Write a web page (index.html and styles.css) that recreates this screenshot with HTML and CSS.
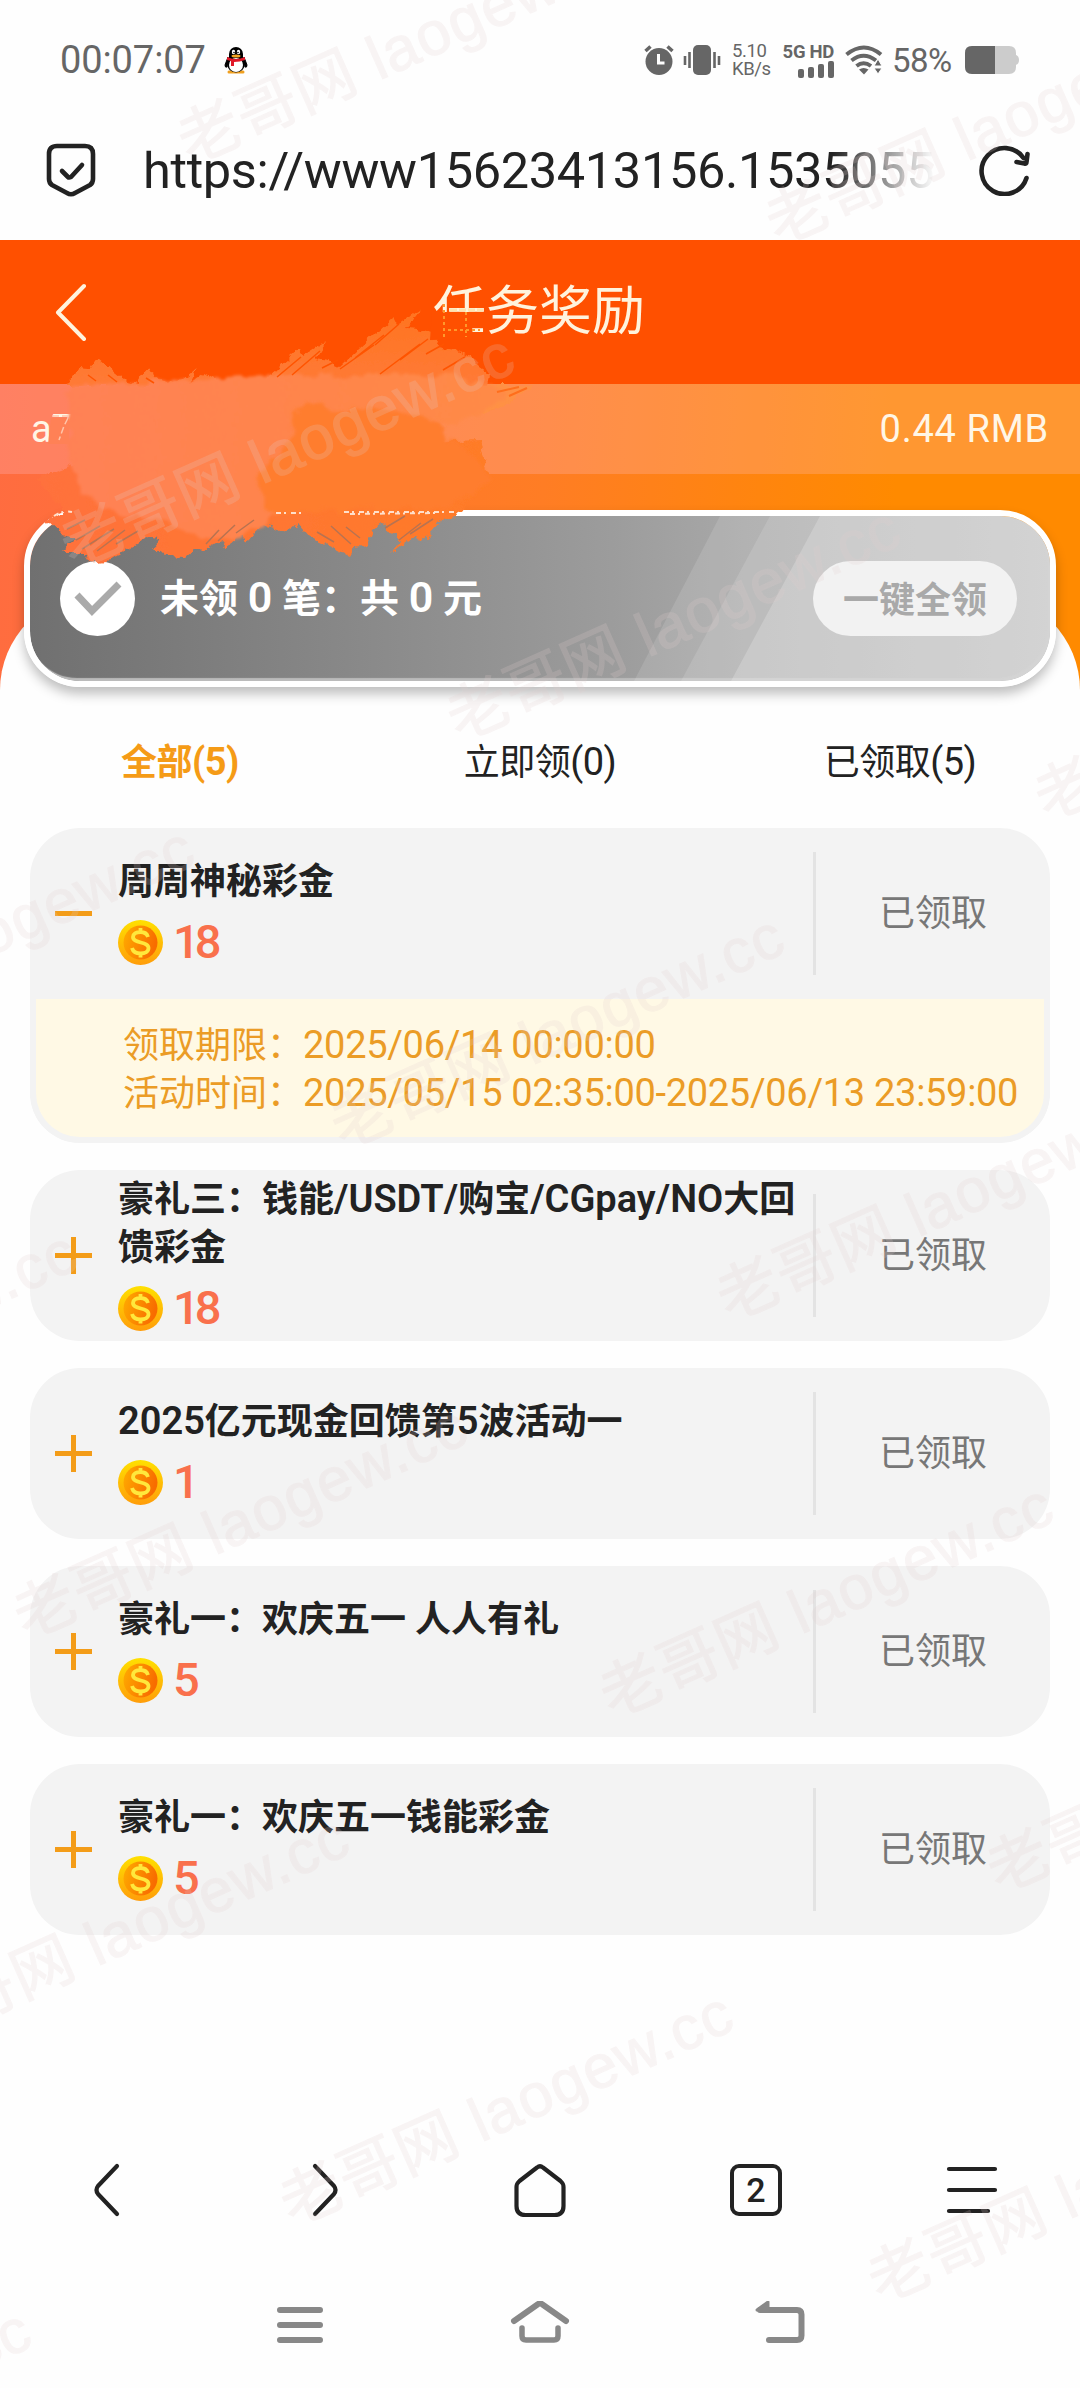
FILE: index.html
```html
<!DOCTYPE html>
<html lang="zh-CN">
<head>
<meta charset="utf-8">
<title>任务奖励</title>
<link rel="stylesheet" href="styles.css">
</head>
<body>
<div class="screen">
  <header class="status">
    <span class="clock">00:07:07</span>
    <svg class="penguin" width="24" height="28" viewBox="0 0 24 28">
      <path d="M5 26h6M13 26h6" stroke="#f0a020" stroke-width="3" stroke-linecap="round"/>
      <path d="M4 11L1 19q0 3 2 2zM20 11l3 8q0 3-2 2z" fill="#000" stroke="#000"/>
      <ellipse cx="12" cy="18" rx="9" ry="8.500" fill="#000"/>
      <ellipse cx="12" cy="19" rx="7" ry="7" fill="#fff"/>
      <path d="M5 12V8a7 7 0 0 1 14 0v4z" fill="#000"/>
      <ellipse cx="9.500" cy="6" rx="1.700" ry="2.300" fill="#fff"/><ellipse cx="14.500" cy="6" rx="1.700" ry="2.300" fill="#fff"/>
      <circle cx="10" cy="6.500" r=".8"/><circle cx="14" cy="6.500" r=".8"/>
      <ellipse cx="12" cy="10" rx="4.500" ry="1.500" fill="#f5a623"/>
      <path d="M3 11q9 4 18 0v3q-5 2-11 2v4H7v-5l-4-1z" fill="#e01828"/>
    </svg>
    <span class="grow"></span>
    <svg class="alarm" width="30" height="30" viewBox="0 0 30 30">
      <circle cx="15" cy="16.500" r="13.500" fill="#666"/>
      <path d="M1.500 6l5-4.500M28.500 6l-5-4.500" stroke="#666" stroke-width="3.500"/>
      <path d="M14.500 9v9h6" fill="none" stroke="#fff" stroke-width="3"/>
    </svg>
    <svg class="vibrate" width="38" height="32" viewBox="0 0 38 32">
      <rect x="10" y="1" width="18" height="30" rx="5" fill="#666"/>
      <path d="M2 12v9M6.500 8v16M31.500 8v16M36 12v9" stroke="#666" stroke-width="2.600"/>
    </svg>
    <span class="speed">5.10<br>KB/s</span>
    <span class="network">
      <b>5G HD</b>
      <svg width="36" height="17" viewBox="0 0 36 17" fill="#666"><rect y="8" width="6" height="9" rx="2"/><rect x="10" y="6" width="6" height="11" rx="2"/><rect x="20" y="3" width="6" height="14" rx="2"/><rect x="30" width="6" height="17" rx="2"/></svg>
    </span>
    <svg class="wifi" width="38" height="30" viewBox="0 0 38 30" fill="none" stroke="#666" stroke-width="4">
      <path d="M1.500 9.500Q19-4.500 36 9.500M6.500 15.500q12-9.500 24.500 0M11.500 21q7-5.500 14.500 0"/>
      <path d="M14 24.500q4.500-3 9.500 0l-4.500 5z" fill="#666" stroke="none"/>
      <path d="M29 21l4-7 4 7zM29 23h8l-4 6z" fill="#666" stroke="#fff" stroke-width="1"/>
    </svg>
    <span class="percent">58%</span>
    <svg class="battery" width="54" height="28" viewBox="0 0 54 28">
      <path d="M7 0h37q7 0 7 7v2q3 1 3 5t-3 5v2q0 7-7 7H7q-7 0-7-7V7q0-7 7-7z" fill="#ccc"/>
      <path d="M30 0H7Q0 0 0 7v14q0 7 7 7h23z" fill="#666"/>
    </svg>
  </header>

  <div class="address">
    <svg width="50" height="54" viewBox="0 0 50 54" fill="none" stroke="#222" stroke-width="4.600" stroke-linecap="round" stroke-linejoin="round">
      <path d="M11 3h28q8 0 8 8v25q0 4-3 6L29 50q-4 2.500-8 0L6 42q-3-2-3-6V11q0-8 8-8z"/>
      <path d="M16 28l6 6q1 1 3 0L36 22"/>
    </svg>
    <span class="url">https://www15623413156.1535055</span>
    <svg class="reload" width="52" height="52" viewBox="0 0 52 52" fill="none" stroke="#222" stroke-width="4.600" stroke-linecap="round" stroke-linejoin="round">
      <path d="M44.500 14A23 23 0 1 0 47.500 34"/><path d="M48.500 10l-1 8q0 2-2 1.500l-8-1.500"/>
    </svg>
  </div>

  <main class="page">
    <div class="titlebar">
      <svg width="32" height="58" viewBox="0 0 32 58" fill="none" stroke="#fff3dd" stroke-width="4" stroke-linecap="round" stroke-linejoin="round"><path d="M29 3L3 29.500 29 56"/></svg>
      <h1>任务奖励</h1>
    </div>

    <section class="hero">
      <div class="account"><span>a7</span><span class="balance">0.44 RMB</span></div>
      <div class="summary">
        <svg class="stripes" width="1020" height="165" viewBox="0 0 1020 165">
          <path d="M690 0H1020V165H604z" fill="#fff" fill-opacity=".12"/>
          <path d="M740 0H1020V165H651z" fill="#fff" fill-opacity=".13"/>
          <path d="M790 0H1020V165H701z" fill="#fff" fill-opacity=".2"/>
        </svg>
        <svg class="badge" width="75" height="75" viewBox="0 0 75 75"><circle cx="37.500" cy="37.500" r="37.500" fill="#fff"/><path d="M17 34l15 16 27-27" fill="none" stroke="#aaa" stroke-width="7"/></svg>
        <strong>未领 <i>0</i> 笔：共 <i>0</i> 元</strong>
        <button class="claim">一键全领</button>
      </div>
      <svg class="brush" width="1080" height="330" viewBox="0 240 1080 330">
        <defs>
          <linearGradient id="upper" gradientUnits="userSpaceOnUse" x1="40" x2="560" y1="0" y2="0"><stop offset="0" stop-color="#ff8156"/><stop offset=".55" stop-color="#ff854b"/><stop offset="1" stop-color="#ff8c44"/></linearGradient>
          <linearGradient id="lower" gradientUnits="userSpaceOnUse" x1="40" x2="480" y1="0" y2="0"><stop offset="0" stop-color="#ff713c"/><stop offset="1" stop-color="#ff7b28"/></linearGradient>
          <linearGradient id="spikes" gradientUnits="userSpaceOnUse" x1="0" x2="0" y1="310" y2="384"><stop offset="0" stop-color="#ff7420"/><stop offset="1" stop-color="#ff7a36"/></linearGradient>
          <filter id="rough" x="-5%" y="-5%" width="110%" height="110%"><feTurbulence type="fractalNoise" baseFrequency=".12" numOctaves="3" seed="4"/><feDisplacementMap in="SourceGraphic" scale="9" xChannelSelector="R" yChannelSelector="G"/></filter>
          <filter id="soft" x="-10%" y="-10%" width="120%" height="120%"><feTurbulence type="fractalNoise" baseFrequency=".06" numOctaves="3" seed="7"/><feDisplacementMap in="SourceGraphic" scale="18" xChannelSelector="R" yChannelSelector="G"/><feGaussianBlur stdDeviation="1.500"/></filter>
        </defs>
        <g filter="url(#rough)">
          <path fill="url(#lower)" d="M36 478L100 455 480 440 488 476 462 511 437 524 420 543 416 535 392 553 400 540 396 535 390 533 383 523 373 531 367 545 355 547 350 556 330 546 310 537 298 523 287 531 262 524 247 541 244 534 222 549 224 540 208 549 195 548 185 557 165 556 153 548 160 540 147 537 130 547 110 560 90 563 82 552 62 552 75 540 62 535 47 521 65 511z"/>
          <path fill="url(#spikes)" d="M66 386L78 367 90 368 97 358 122 380 136 384 146 368 168 383 182 380 197 368 189 385 204 373 228 386 258 386 300 348 304 355 326 341 315 359 327 361 340 367 393 317 397 325 421 309 407 328 418 329 440 334 437 347 455 350 470 357 480 367 489 373 487 386z"/>
          <path d="M488 385l46 0-38 25-38 6z" fill="#ff9144"/>
        </g>
        <path filter="url(#soft)" fill="url(#upper)" d="M68 455L68 396 72 386 130 383 300 374 440 376 495 386 510 395 488 410 458 423 430 420 390 460 300 480 272 517 236 535 212 542 190 530 150 520 110 510 75 486z"/>
        <path filter="url(#soft)" fill="#ff7d2d" d="M300 405l24 2 20 3 40-2 34 6 22 9 10 17 16 10 20 24 3 5-19 15-22 15-58 0-120 3-10-16-6-20 24-20 14-25z"/>
        <g fill="none" stroke="#ff5400" stroke-width="1.500"><path d="M277 377l24-20M292 375l28-24M322 368l16-8M340 369l34-24M355 358l29-23M375 345l24-21M380 374l40-30M400 360l28-21M426 354l18-10M443 370l22-13M88 375l8 6M108 375l9 7M146 378l8 5"/></g>
        <g fill="none" stroke="#ff6e1c" stroke-width="2"><path d="M497 392l22-5M509 396l18-8"/></g>
        <g fill="none" stroke="#b87351" stroke-width="1.500"><path d="M67 529l18-9M76 540l24-14M82 549l32-20M97 551l28-21M116 544l22-13M206 544l13-14M218 541l17-16M236 533l18-13M317 532l17 10M331 526l20 18M346 527l14 11M399 540l22-17M410 534l23-15M385 528l20-12"/></g>
        <g fill="none" stroke="#ffdfca" stroke-width="2" stroke-dasharray="5 3 2 5"><path d="M54 516q9-6 18-4M276 513h30M344 512h112M350 514l90-1"/></g>
        <path d="M432 312h39l2 27-43 1z" fill="#ff5000"/>
        <path d="M444 304v34M466 312v25M448 330h32" fill="none" stroke="#ff982b" stroke-width="2" stroke-dasharray="3 3"/>
        <path d="M450 310h33" stroke="#ffe4ae" stroke-width="3" stroke-dasharray="7 2"/>
        <path d="M51 418h18v26H48z" fill="#ff8156"/>
        <path d="M52 416h17M68 418l-4 8-5 14" fill="none" stroke="#ffc5aa" stroke-width="1.500" stroke-dasharray="7 3"/>
      </svg>
    </section>

    <section class="panel">
      <nav class="tabs"><span class="active">全部<i>(5)</i></span><span>立即领<i>(0)</i></span><span>已领取<i>(5)</i></span></nav>
      <div class="list">
        <article class="card">
          <div class="row">
            <span class="toggle"></span>
            <div class="info"><h2>周周神秘彩金</h2><div class="prize"><svg class="coin"><use href="#coin"/></svg>18</div></div>
            <span class="state">已领取</span>
          </div>
          <div class="detail">
            <p>领取期限：<i>2025/06/14 00:00:00</i></p>
            <p>活动时间：<i>2025/05/15 02:35:00-2025/06/13 23:59:00</i></p>
          </div>
        </article>
        <article class="card">
          <div class="row">
            <span class="toggle plus"></span>
            <div class="info"><h2>豪礼三：钱能<i>/USDT/</i>购宝<i>/CGpay/NO</i>大回<br>馈彩金</h2><div class="prize"><svg class="coin"><use href="#coin"/></svg>18</div></div>
            <span class="state">已领取</span>
          </div>
        </article>
        <article class="card">
          <div class="row">
            <span class="toggle plus"></span>
            <div class="info"><h2><i>2025</i>亿元现金回馈第<i>5</i>波活动一</h2><div class="prize"><svg class="coin"><use href="#coin"/></svg>1</div></div>
            <span class="state">已领取</span>
          </div>
        </article>
        <article class="card">
          <div class="row">
            <span class="toggle plus"></span>
            <div class="info"><h2>豪礼一：欢庆五一 人人有礼</h2><div class="prize"><svg class="coin"><use href="#coin"/></svg>5</div></div>
            <span class="state">已领取</span>
          </div>
        </article>
        <article class="card">
          <div class="row">
            <span class="toggle plus"></span>
            <div class="info"><h2>豪礼一：欢庆五一钱能彩金</h2><div class="prize"><svg class="coin"><use href="#coin"/></svg>5</div></div>
            <span class="state">已领取</span>
          </div>
        </article>
      </div>
    </section>
  </main>

  <footer class="toolbar">
    <svg width="54" height="56" viewBox="0 0 54 56"><path d="M36 4L17 24q-3 4 0 8L36 52"/></svg>
    <svg width="54" height="56" viewBox="0 0 54 56"><path d="M18 4l19 20q3 4 0 8L18 52"/></svg>
    <svg width="54" height="56" viewBox="0 0 54 56"><path d="M24 5.500L6.500 19Q3.500 21.500 3.500 25v19q0 9 9 9h29q9 0 9-9V25q0-3.500-3-6L30 5.500q-3-2.500-6 0z"/></svg>
    <span class="count">2</span>
    <svg width="54" height="56" viewBox="0 0 54 56"><path d="M4 7h46M4 28h46M4 49h39"/></svg>
  </footer>
  <footer class="system">
    <svg width="60" height="48" viewBox="0 0 60 48"><path d="M10 9h40M10 24h40M10 39h40"/></svg>
    <svg width="60" height="48" viewBox="0 0 60 48"><path d="M4 20L27.500 3.500q2.500-2 5 0L56 20"/><path d="M12 27v8q0 4 4 4h28q4 0 4-4v-8" stroke-width="5.500"/></svg>
    <svg width="60" height="48" viewBox="0 0 60 48"><path d="M10 9h37q4.500 0 4.500 4.500v21q0 4.500-4.500 4.500H19"/><path d="M18 1v8H7z" fill="#888" stroke-width="3"/></svg>
  </footer>

  <svg class="watermarks" width="1080" height="2388" viewBox="0 0 1080 2388">
    <defs>
      <text id="mark" x="-31" y="23">老哥网 laogew.cc</text>
      <linearGradient id="rim" x2="0" y2="1"><stop offset="0" stop-color="#ffe000"/><stop offset="1" stop-color="#ff9d0a"/></linearGradient>
      <linearGradient id="core" x2="1" y2=".3"><stop offset="0" stop-color="#ffad00"/><stop offset="1" stop-color="#f86c00"/></linearGradient>
      <symbol id="coin" viewBox="0 0 45 45">
        <circle cx="22.500" cy="22.500" r="22.500" fill="url(#rim)"/>
        <circle cx="22.500" cy="22.500" r="17" fill="url(#core)"/>
        <path d="M30 17q-1.500-5-7.500-5c-4.500 0-7.500 2-7.500 5 0 7 15.500 4 15.500 11 0 3.500-3.500 5.500-8 5.500q-7 0-8.500-5.500M22.500 8v4M22.500 33.500v4" fill="none" stroke="#ffe83c" stroke-width="3.800"/>
      </symbol>
    </defs>
    <use href="#mark" transform="translate(209 131) rotate(-24)"/>
    <use href="#mark" transform="translate(797 212) rotate(-24)"/>
    <use href="#mark" transform="translate(92 535) rotate(-24)"/>
    <use href="#mark" transform="translate(478 708) rotate(-24)"/>
    <use href="#mark" transform="translate(1066 788) rotate(-24)"/>
    <use href="#mark" transform="translate(-228 1028) rotate(-24)"/>
    <use href="#mark" transform="translate(362 1116) rotate(-24)"/>
    <use href="#mark" transform="translate(748 1288) rotate(-24)"/>
    <use href="#mark" transform="translate(-345 1432) rotate(-24)"/>
    <use href="#mark" transform="translate(45 1606) rotate(-24)"/>
    <use href="#mark" transform="translate(631 1685) rotate(-24)"/>
    <use href="#mark" transform="translate(1018 1860) rotate(-24)"/>
    <use href="#mark" transform="translate(-73 2017) rotate(-24)"/>
    <use href="#mark" transform="translate(311 2193) rotate(-24)"/>
    <use href="#mark" transform="translate(899 2270) rotate(-24)"/>
    <use href="#mark" transform="translate(-391 2510) rotate(-24)"/>
  </svg>
</div>
</body>
</html>
```
FILE: styles.css
```css
* { box-sizing: border-box; }
body { margin: 0; background: #fefefe; }
h1, h2, p { margin: 0; }
i { font-style: normal; font-size: 38px; line-height: 1; }

.screen {
  position: relative;
  display: flex;
  flex-direction: column;
  width: 1080px;
  height: 2388px;
  overflow: hidden;
  font-family: Roboto, "Noto Sans CJK SC", sans-serif;
  font-size: 36px;
  color: #222;
}

/* Phone status bar */
.status { display: flex; align-items: center; height: 120px; padding: 0 61px 0 60px; color: #666; }
.clock { font-size: 38px; letter-spacing: -0.1px; }
.penguin { margin-left: 18px; }
.grow { flex: 1; }
.alarm { margin-right: 9px; }
.vibrate { margin-right: 11px; }
.speed { width: 37px; font-size: 18.5px; line-height: 18px; letter-spacing: -0.4px; margin-right: 12px; white-space: nowrap; }
.network { display: flex; flex-direction: column; align-items: flex-end; width: 53px; font-size: 18.5px; line-height: 18px; letter-spacing: -0.3px; margin-right: 11px; white-space: nowrap; }
.wifi { margin-right: 9px; }
.percent { width: 65px; font-size: 33px; letter-spacing: -0.5px; margin-right: 8px; }

/* Address bar */
.address { display: flex; align-items: center; height: 120px; padding: 0 49px 20px 46px; }
.url {
  width: 792px;
  margin-left: 47px;
  overflow: hidden;
  font-size: 50.5px;
  letter-spacing: -0.35px;
  white-space: nowrap;
  -webkit-mask-image: linear-gradient(90deg, #000 87%, transparent 100%);
  mask-image: linear-gradient(90deg, #000 87%, transparent 100%);
}
.reload { margin-left: auto; }

/* Page heading and account */
.page { height: 1860px; }
.titlebar { display: grid; grid-template-columns: 1fr auto 1fr; align-items: center; height: 144px; padding: 0 57px 0 55px; background: #ff5000; color: #fff3dd; }
.titlebar h1 { margin-top: 0; font-size: 53px; font-weight: 400; line-height: 78px; }
.titlebar svg { margin-top: -1px; }
.hero { position: relative; height: 306px; background: linear-gradient(94deg, #ff6c40, #ff7d24 50%, #ff8a00 82%); }
.hero::after { content: ""; display: block; height: 96px; margin-top: -93px; border-radius: 96px 96px 0 0; background: #fefefe; }
.account { display: flex; align-items: center; justify-content: space-between; height: 90px; padding: 0 31px; background: rgba(255, 205, 230, .21); color: #fff6e6; font-size: 38px; }
.balance { letter-spacing: 0.7px; }
.summary {
  position: relative;
  z-index: 1;
  display: flex;
  align-items: center;
  width: 1032px;
  height: 177px;
  margin: 36px 24px 0;
  padding: 0 33px 0 30px;
  border: 6px solid #fff;
  border-radius: 56px;
  background: linear-gradient(90deg, #707070, #9c9c9c 57%, #a8a8a8 70%, #b8b8b8) padding-box;
  box-shadow: 0 7px 12px rgba(0, 0, 0, .25);
  color: #fff;
}
.stripes { position: absolute; inset: 0; border-radius: 50px; box-shadow: inset -3px -3px 1px #bbb; }
.badge, .summary strong, .claim { position: relative; }
.summary strong { margin-left: 25px; font-size: 39px; font-weight: 700; line-height: 54px; white-space: pre; }
.summary i { font-size: 43px; font-weight: 600; }
.claim { width: 204px; height: 75px; margin-left: auto; padding: 0 0 4px; border: 0; border-radius: 38px; background: #f2f2f2; color: #a9a9a9; font: 700 36px/58px "Noto Sans CJK SC", sans-serif; }
.brush { position: absolute; z-index: 2; left: 0; top: -144px; }

/* Reward list */
.panel { background: #fefefe; }
.tabs { display: grid; grid-template-columns: repeat(3, 1fr); align-items: center; height: 138px; padding-top: 7px; text-align: center; }
.tabs span { line-height: 54px; letter-spacing: -0.5px; }
.tabs .active { color: #f59b16; font-weight: 700; }
.list { display: flex; flex-direction: column; gap: 27px; padding: 0 30px; }
.card { overflow: hidden; border-radius: 50px; background: #f3f3f3; }
.row { display: flex; align-items: center; height: 171px; }
.toggle { position: relative; width: 37px; height: 37px; margin: 0 26px 0 25px; background: linear-gradient(#f39c18, #f39c18) center / 37px 5px no-repeat; }
.plus { background: linear-gradient(#f39c18, #f39c18) center / 37px 5px no-repeat, linear-gradient(#f39c18, #f39c18) center / 5px 37px no-repeat; }
.info { width: 695px; white-space: nowrap; }
.info h2 { position: relative; top: 2px; font-size: 36px; font-weight: 700; line-height: 48px; }
.info h2 i { font-size: 38px; font-weight: 600; }
.prize { display: flex; align-items: center; height: 67px; padding-top: 9px; color: #f9704c; font-size: 47px; font-weight: 500; letter-spacing: -5px; line-height: 58px; }
.coin { width: 45px; height: 45px; margin-right: 10px; }
.state { display: flex; align-items: center; justify-content: center; flex: 1; height: 123px; padding-bottom: 7px; border-left: 3px solid #e3e3e3; color: #777; }
.detail { height: 144px; padding: 23px 0 0 87px; border: solid #f3f3f3; border-width: 0 6px 6px; border-radius: 0 0 50px 50px; background: #fff9e5; color: #eb9c26; white-space: nowrap; }
.detail p { height: 48px; line-height: 48px; }
.detail i { letter-spacing: -0.3px; }

/* Browser toolbar and system navigation */
.toolbar { display: grid; grid-template-columns: repeat(5, 216px); place-items: center; height: 180px; }
.toolbar svg { fill: none; stroke: #222; stroke-width: 4.200; stroke-linecap: round; stroke-linejoin: round; }
.count { width: 52px; height: 52px; border: 4px solid #222; border-radius: 9px; font-size: 34px; font-weight: 500; line-height: 44px; text-align: center; }
.system { display: grid; grid-template-columns: repeat(3, 240px); place-content: center; place-items: center; height: 90px; }
.system svg { fill: none; stroke: #888; stroke-width: 6; stroke-linecap: round; stroke-linejoin: round; }

.watermarks { position: absolute; inset: 0; z-index: 5; pointer-events: none; fill: rgb(226, 206, 206); font: 61.500px "Liberation Sans", "Noto Sans CJK SC", sans-serif; letter-spacing: 1.300px; }
#mark { stroke: rgb(226, 206, 206); stroke-width: 1.200px; opacity: .2; }
```
